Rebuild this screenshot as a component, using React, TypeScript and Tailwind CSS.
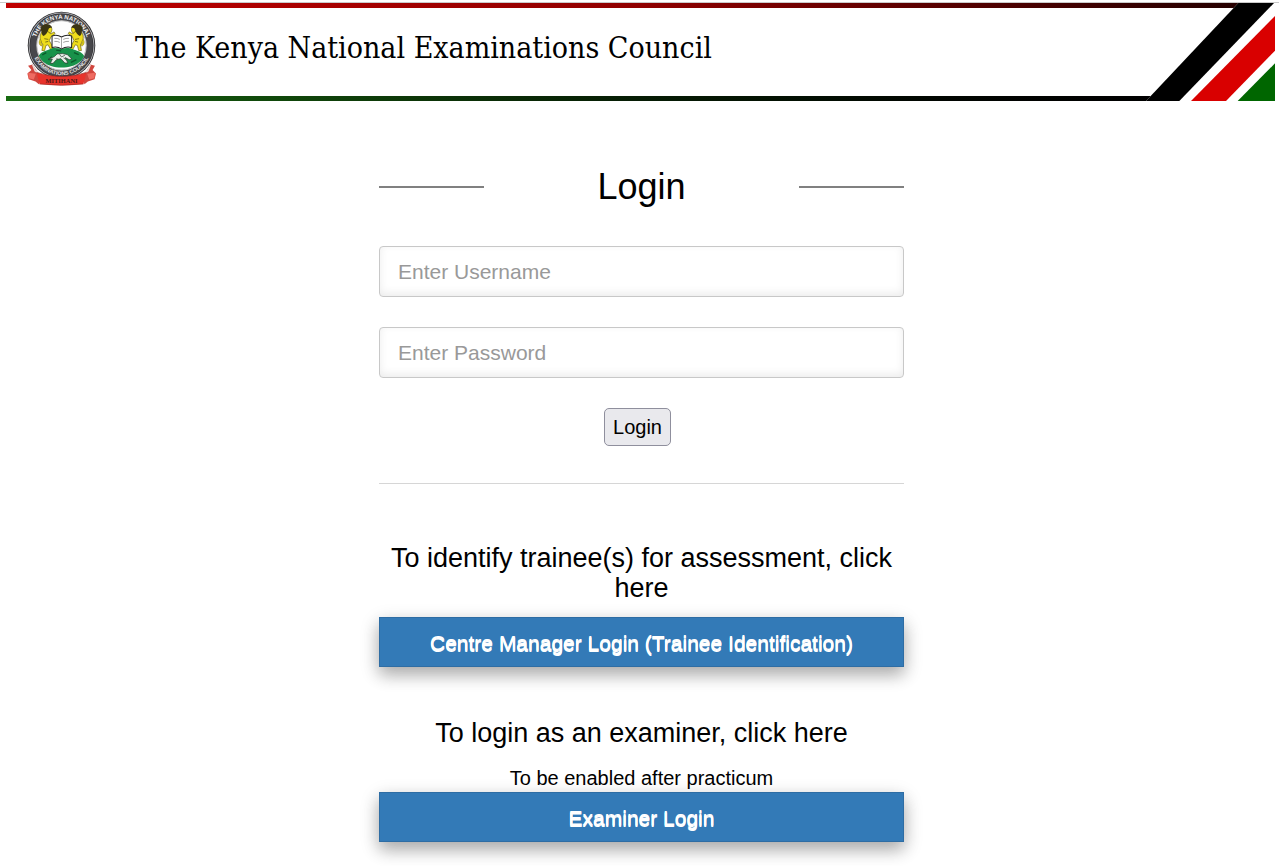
import type { ReactNode } from "react";

function Lion() {
  return (
    <g>
      <path
        d="M132 84c8-7 20-4 22 5 2 6-1 12-5 16 4 1 8-3 12-5l3 5-12 9-5 12 7 12 5 16h-7l-9-16-6 2-4 15h-8l3-17-5-8c-4-8-5-17-1-24z"
        fill="#eedc1c"
        stroke="#6d6410"
        strokeWidth="2"
      />
      <path d="M124 98c-6-8 0-19 10-20 10-2 20 2 21 10-6-2-10 0-11 6-3 8-8 15-14 18-5-2-6-8-6-14z" fill="#3b3514" />
      <path d="M124 142c-7-3-10-12-5-20l5 5c-2 4-1 8 3 10z" fill="#d8c61a" stroke="#6d6410" />
      <path d="M132 120l12 2m-9 8l9-2m-3-30l8 5" stroke="#4d470e" strokeWidth="2" />
    </g>
  );
}

function Emblem() {
  return (
    <svg viewBox="78 38 210 222" className="h-[75px] w-[71px] shrink-0" role="img" aria-label="Council emblem">
      <defs>
        <path id="emblem-top" d="M106 158a79 79 0 1 1 154 0" />
        <path id="emblem-bottom" d="M95 140a88 88 0 0 0 176 0" />
      </defs>
      <circle cx="183" cy="140" r="100" fill="#2a2a2c" />
      <circle cx="183" cy="140" r="96" fill="none" stroke="#a9a9ad" strokeWidth="3" />
      <circle cx="183" cy="140" r="83" fill="none" stroke="#47474b" strokeWidth="20" />
      <circle cx="183" cy="140" r="73" fill="#fdfdfd" stroke="#c4c4c4" strokeWidth="3" />
      <text fontFamily="Liberation Sans" fontSize="18" fontWeight="700" fill="#f1f1f1">
        <textPath href="#emblem-top" startOffset="50%" textAnchor="middle">THE KENYA NATIONAL</textPath>
      </text>
      <text fontFamily="Liberation Sans" fontSize="16" fontWeight="700" fill="#e4e4e4">
        <textPath href="#emblem-bottom" startOffset="50%" textAnchor="middle">EXAMINATIONS COUNCIL</textPath>
      </text>
      <Lion />
      <g transform="translate(367 0) scale(-1 1)">
        <Lion />
      </g>
      <path
        d="M116 170c9-14 23-15 32-19 10-6 24-3 35-1 13-4 28-3 37 3 9 3 22 5 30 18-6 15-20 25-36 30-20 6-43 6-62 0-16-5-30-15-36-31z"
        fill="#18924a"
      />
      <path d="M126 168l12-7m7 22l9-10m57 17l16-8m-7-21l14 6m-67-13l15 2" stroke="#0b5b2c" strokeWidth="4" />
      <path d="M144 181l18-8 8-8 16-1 14 3 14 13-8 2-12-6 8 16h-9l-12-13-13 3-10 11h-8l6-13z" fill="#e9efe9" stroke="#243329" strokeWidth="2" />
      <path d="M177 166l6 8 10-5m-25 8l5 5m16-5l8 5" stroke="#27352b" strokeWidth="2" fill="none" />
      <path d="M155 112q15-5 28 3 14-8 30-3v34q-16-4-30 4-13-8-28-4z" fill="#fff" stroke="#242424" strokeWidth="3" />
      <path d="M183 115v34M162 119q9-1 16 3m-16 6q9-1 16 3m10-9q8-4 17-3m-17 12q8-4 17-3" stroke="#777" strokeWidth="2" fill="none" />
      <path d="M98 196l-14 4 10 13-12 10 4 17 20 7 10 8 8-24-12-12z" fill="#d1463e" />
      <path d="M268 196l14 4-7 13 10 10-4 17-20 7-10 8-8-24 12-12z" fill="#d1463e" />
      <path d="M84 221l23 3-6 17-15-4zM282 221l-23 3 6 17 15-4z" fill="#ef6b61" />
      <path d="M98 197l7 18 15 10m148-28l-7 18-15 10" fill="none" stroke="#ead8d5" strokeWidth="5" />
      <path d="M109 220q75 24 148 0l-9 34q-65 8-130 0z" fill="#e8332b" />
      <path d="M109 220q75 24 148 0m-139 34q65 8 130 0" fill="none" stroke="#9c2923" strokeWidth="2" />
      <text x="183" y="250" textAnchor="middle" fontFamily="Liberation Serif" fontSize="19" fontWeight="700" fill="#4b1713">
        MITIHANI
      </text>
    </svg>
  );
}

function FlagStripes() {
  return (
    <svg viewBox="48 9 387 294" preserveAspectRatio="none" className="absolute top-0 right-0 h-full w-[129px]" aria-hidden="true">
      <path d="M325 9h110v294H48z" fill="#fff" />
      <path d="M325 9h107L148 303H48z" fill="#000" />
      <path d="M435 48v104L288 303H183z" fill="#d90000" />
      <path d="M435 190v113H323z" fill="#006600" />
    </svg>
  );
}

function BlueLink({ children }: { children: ReactNode }) {
  return (
    <a
      href="#"
      className="flex h-[50px] items-center justify-center border border-[#2e6da4] bg-[#337ab7] pt-1 text-[21px] text-white shadow-[0_8px_16px_rgba(0,0,0,0.2),0_6px_20px_rgba(0,0,0,0.19)] [text-shadow:0_1px_0_#fff,0_-1px_0_#fff]"
    >
      {children}
    </a>
  );
}

const fieldClass =
  "block h-[51px] w-full rounded-[4px] border border-[#c8c8c8] bg-white px-[18px] text-[21px] text-black shadow-[inset_0_-3px_9px_rgba(0,0,0,0.08)] outline-none placeholder:text-[#999] placeholder:opacity-100";

export default function App() {
  return (
    <div className="bg-white font-['Liberation_Sans',Arial,sans-serif] text-black">
      <div className="h-[3px] border-b border-[#c9c9c9]" />
      <header className="relative mr-1 ml-1.5 flex h-[98px] flex-col">
        <div className="h-[5px] bg-linear-to-r from-[#c00000] via-[#900000] to-[#200000]" />
        <div className="flex flex-1 items-center pb-2 pl-5">
          <Emblem />
          <p className="pl-[38px] font-['DejaVu_Serif_Condensed','DejaVu_Serif',serif] text-[30px] leading-10">
            The Kenya National Examinations Council
          </p>
        </div>
        <div className="h-[5px] bg-linear-to-r from-[#176b10] via-[#061c04] to-black" />
        <FlagStripes />
      </header>

      <main className="pb-6 pl-1">
        <div className="mx-auto w-full max-w-[525px] pt-[65px]">
          <div className="flex items-center justify-between">
            <span className="h-0.5 w-1/5 bg-[#808080]" />
            <h1 className="text-[36px] leading-[42px]">Login</h1>
            <span className="h-0.5 w-1/5 bg-[#808080]" />
          </div>

          <form className="mt-[38px] flex flex-col gap-[30px]" onSubmit={(event) => event.preventDefault()}>
            <input aria-label="Username" type="text" placeholder="Enter Username" className={fieldClass} />
            <input aria-label="Password" type="password" placeholder="Enter Password" className={fieldClass} />
            <button
              type="submit"
              className="mr-2 h-[38px] self-center rounded-[5px] border border-[#8f8f9d] bg-[#e9e9ed] px-2 text-[20px]"
            >
              Login
            </button>
          </form>

          <hr className="mt-[37px] border-[#d6d6d6]" />

          <section className="mt-[59px] text-center">
            <h2 className="mb-3.5 text-[27px] leading-[30px]">To identify trainee(s) for assessment, click here</h2>
            <BlueLink>Centre Manager Login (Trainee Identification)</BlueLink>
          </section>

          <section className="mt-[51px] text-center">
            <h2 className="mb-4 text-[27px] leading-[30px]">To login as an examiner, click here</h2>
            <p className="text-[20px] leading-7">To be enabled after practicum</p>
            <BlueLink>Examiner Login</BlueLink>
          </section>
        </div>
      </main>
    </div>
  );
}
